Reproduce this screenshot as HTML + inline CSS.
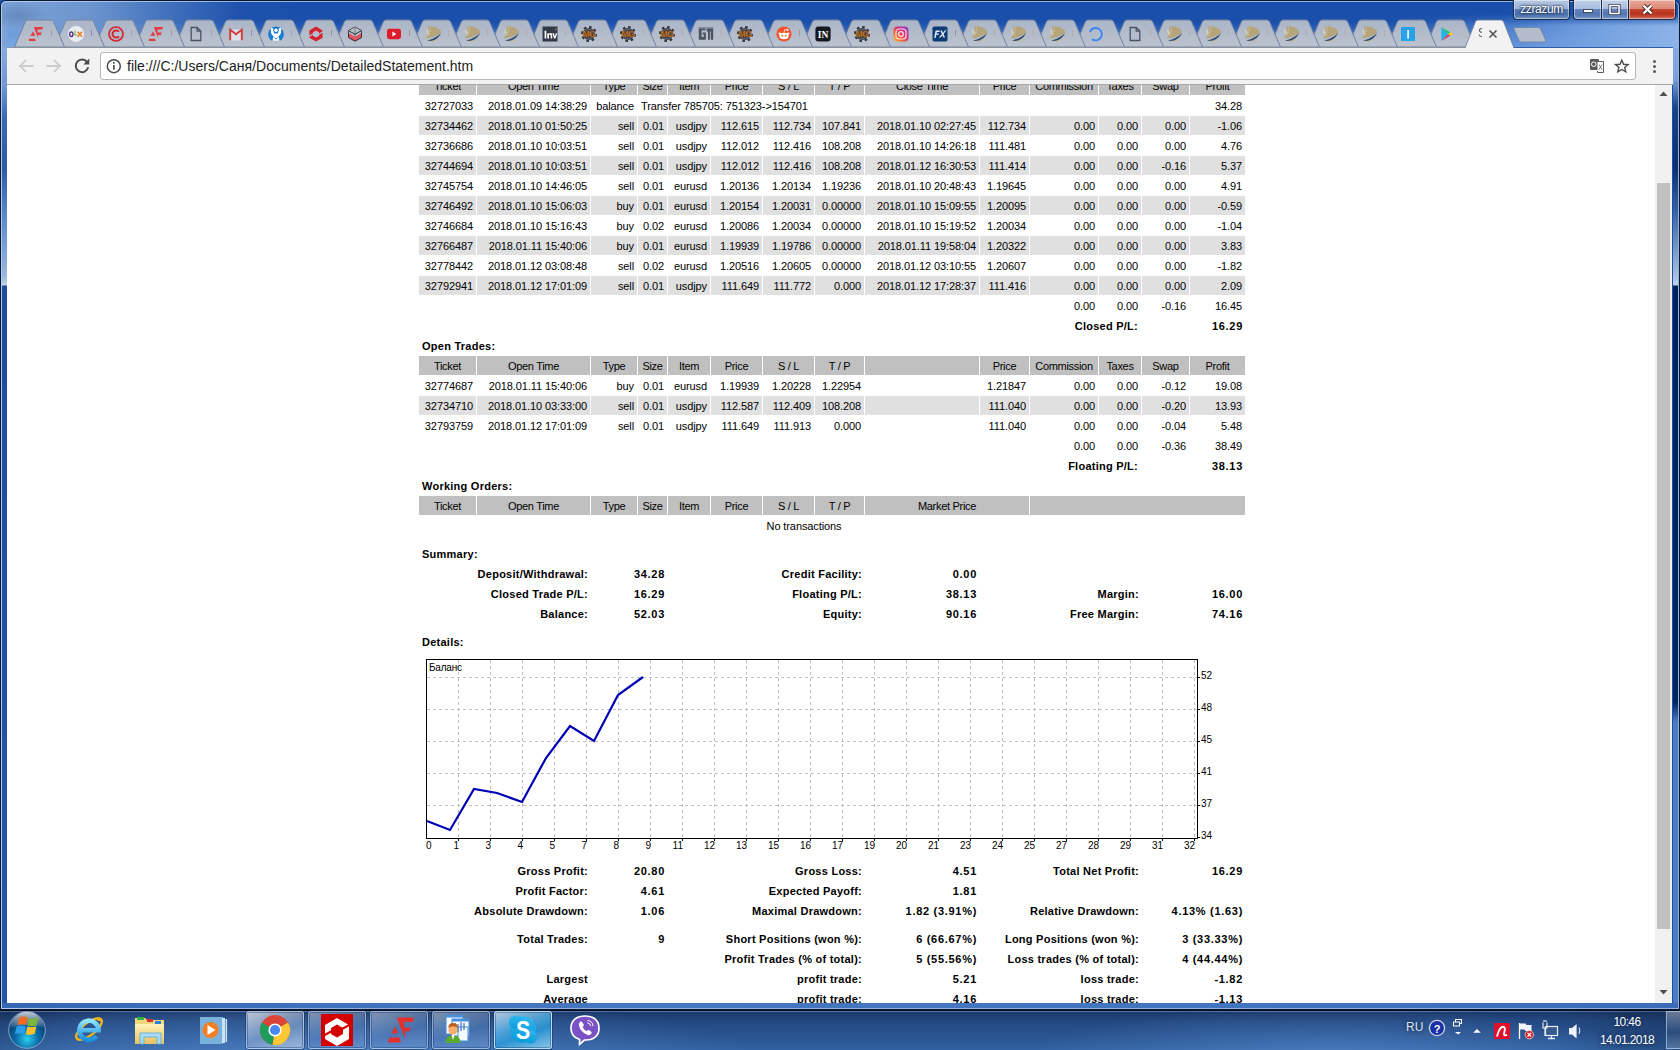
<!DOCTYPE html><html><head><meta charset="utf-8"><style>
#frame{position:absolute;left:0;top:0;width:1680px;height:1010px;
 background:
  radial-gradient(ellipse 30px 14px at 16px 14px,rgba(60,90,140,.35),rgba(60,90,140,0)),
  linear-gradient(90deg,rgba(125,165,215,1) 0,rgba(112,152,208,.95) 90px,rgba(80,125,195,.7) 170px,rgba(40,90,175,.25) 240px,rgba(26,79,171,0) 300px),
  #1a4fab;border:1px solid #0b1630;border-radius:6px 6px 0 0}
#rglow{position:absolute;left:1400px;top:14px;width:278px;height:34px;background:linear-gradient(90deg,rgba(110,155,220,0) 0,rgba(100,148,218,.55) 100px,rgba(118,162,225,.9) 180px,rgba(140,180,232,1) 278px);-webkit-mask-image:linear-gradient(180deg,transparent 0,#000 12px);mask-image:linear-gradient(180deg,transparent 0,#000 12px)}
#frame:before{content:"";position:absolute;left:0;top:0;right:0;bottom:0;border:1px solid rgba(200,220,245,.7);border-radius:5px 5px 0 0}
#lf{position:absolute;left:2px;top:47px;width:5px;height:957px;background:linear-gradient(180deg,#86aadc 0,#6f98d2 40px,#3a6ab4 70px,#2a5aa6 120px,#5a8ac8 170px,#9ab8e0 230px,#c4d4ec 238px,#1c4c9c 239px,#1f52a5 600px,#2456a8 957px)}
#rf{position:absolute;left:1673px;top:47px;width:5px;height:957px;background:linear-gradient(180deg,#86aadc 0,#7aa0d8 32px,#1a4488 60px,#0c2e6c 120px,#3a64a4 166px,#a8c0e0 230px,#c0d4ec 238px,#00205a 239px,#00245e 655px,#4a7cc4 675px,#4a7cc4 957px)}
#bf{position:absolute;left:2px;top:1003px;width:1676px;height:5px;background:linear-gradient(90deg,#3468b4,#4577c0 30%,#4275bf 70%,#3a6cb8)}
#stripglow{position:absolute;left:7px;top:22px;width:1666px;height:25px;background:linear-gradient(180deg,rgba(90,140,220,0) 0,rgba(100,150,225,.45) 13px,rgba(120,170,235,.7) 25px)}
#toolbar{position:absolute;left:7px;top:48px;width:1666px;height:37px;background:#f2f2f2;border-bottom:1px solid #a8a8a8}
#omni{position:absolute;left:100px;top:52px;width:1536px;height:28px;background:#fff;border:1px solid #b8b8b8;border-radius:3px}
#url{position:absolute;left:127px;top:57px;font-size:14px;line-height:18px;color:#222;white-space:nowrap;letter-spacing:0}
#sb{position:absolute;left:1655px;top:85px;width:17px;height:918px;background:#f1f1f1}
#thumb{position:absolute;left:1657px;top:183px;width:13px;height:746px;background:#c1c1c1}

.wb{position:absolute;top:0;height:20px;border:1px solid #1b2a48;border-top:none;box-shadow:inset 0 0 0 1px rgba(255,255,255,.45)}
#uname{left:1513px;width:57px;border-radius:0 0 4px 4px;background:linear-gradient(180deg,#b7c8e2 0,#9db4d8 45%,#5a7cb4 50%,#4a6faa 75%,#6f90c4 100%)}
#uname span{position:absolute;left:0;right:0;top:3px;text-align:center;font-size:12px;line-height:13px;color:#fff;letter-spacing:-.4px;text-shadow:0 0 3px #0d2040,0 0 2px #0d2040}
#wmin{left:1573px;width:28px;border-radius:0 0 0 4px;border-right:none;background:linear-gradient(180deg,#bfd0e8 0,#a9bedf 45%,#6383bb 50%,#5276b2 75%,#7796c8 100%)}
#wmax{left:1601px;width:27px;border-right:none;background:linear-gradient(180deg,#bfd0e8 0,#a9bedf 45%,#6383bb 50%,#5276b2 75%,#7796c8 100%)}
#wclose{left:1628px;width:48px;border-radius:0 0 4px 0;background:linear-gradient(180deg,#e9a898 0,#de8a78 45%,#c2432c 50%,#b83320 75%,#d0705a 100%)}

#taskbar{position:absolute;left:0;top:1010px;width:1680px;height:40px;overflow:hidden;
 background:linear-gradient(180deg,#050a14 0,#050a14 1px,#5a7cb4 1px,#4a6ca4 2px,#1d3868 2px,#22477f 10px,#2a5593 28px,#3061a2 40px)}
#tbglow{position:absolute;left:0;top:1011px;width:1680px;height:39px;
 background:radial-gradient(ellipse 420px 60px at 330px 45px,rgba(110,160,225,.45),rgba(110,160,225,0)),
 radial-gradient(ellipse 300px 50px at 1330px 45px,rgba(110,160,225,.4),rgba(110,160,225,0)),
 linear-gradient(90deg,rgba(0,0,0,.12) 0,rgba(0,0,0,0) 80px,rgba(0,0,0,0) 1560px,rgba(0,0,0,.15) 1660px)}
.tb{position:absolute;top:1011px;width:58px;height:38px;border:1px solid rgba(180,205,240,.6);border-radius:3px;
 background:linear-gradient(165deg,rgba(255,255,255,.42) 0,rgba(200,225,255,.22) 40%,rgba(140,180,240,.2) 55%,rgba(150,190,245,.32) 100%);
 box-shadow:inset 0 0 0 1px rgba(20,40,80,.35),0 0 0 1px rgba(10,25,50,.35)}
.tb.act{background:linear-gradient(160deg,rgba(255,255,255,.7) 0,rgba(235,242,252,.45) 35%,rgba(200,220,245,.35) 55%,rgba(220,235,250,.55) 100%)}
.tb.sky{background:linear-gradient(160deg,rgba(230,245,255,.75) 0,rgba(90,190,240,.7) 40%,rgba(40,160,225,.75) 60%,rgba(150,215,245,.85) 100%);border-color:rgba(200,235,255,.8)}
.tray{position:absolute;color:#fff;font-size:12px;line-height:14px;white-space:nowrap;letter-spacing:-.6px;text-shadow:0 0 5px rgba(0,10,40,.8)}
#showdesk{position:absolute;left:1666px;top:1011px;width:14px;height:38px;border:1px solid rgba(170,200,240,.7);border-right:none;
 background:linear-gradient(180deg,rgba(255,255,255,.35),rgba(255,255,255,.1) 45%,rgba(255,255,255,.04) 55%,rgba(255,255,255,.2))}

*{margin:0;padding:0;box-sizing:border-box}
html,body{width:1680px;height:1050px;overflow:hidden;background:#1f52aa;font-family:"Liberation Sans",sans-serif}
.abs{position:absolute}
#page{position:absolute;left:7px;top:85px;width:1648px;height:918px;background:#fff;overflow:hidden}
#pc{position:absolute;left:-7px;top:-85px;width:1680px;height:1050px}
.bg{position:absolute;height:19px}
.t{position:absolute;font-size:11px;line-height:19px;height:20px;padding-top:1px;white-space:nowrap;color:#000;letter-spacing:-0.1px}
.t.r{text-align:right}
.t.c{text-align:center}
.t.b{font-weight:bold;letter-spacing:0.25px}
.t.bn{letter-spacing:0.7px}
.t.h{letter-spacing:-0.3px}
.t.sm{font-size:10px;line-height:12px;height:12px;padding-top:0;letter-spacing:0}
</style></head><body><div id="frame"></div><div id="lf"></div><div id="rf"></div><div id="bf"></div><div id="stripglow"></div><div id="rglow"></div><svg class="abs" style="left:0;top:0" width="1680" height="48" viewBox="0 0 1680 48"><defs><linearGradient id="tg" x1="0" y1="0" x2="0" y2="1"><stop offset="0" stop-color="#aab5c8"/><stop offset="1" stop-color="#bcc3cf"/></linearGradient></defs><path d="M1425.5 47 L1436.5 21.5 Q1437.8 20 1439.0 20 L1462.0 20 Q1463.2 20 1464.5 21.5 L1475.5 47 Z" fill="url(#tg)" stroke="#7484a0" stroke-width="1"/><path d="M1386.5 47 L1397.5 21.5 Q1398.8 20 1400.0 20 L1423.0 20 Q1424.2 20 1425.5 21.5 L1436.5 47 Z" fill="url(#tg)" stroke="#7484a0" stroke-width="1"/><path d="M1347.5 47 L1358.5 21.5 Q1359.8 20 1361.0 20 L1384.0 20 Q1385.2 20 1386.5 21.5 L1397.5 47 Z" fill="url(#tg)" stroke="#7484a0" stroke-width="1"/><path d="M1308.5 47 L1319.5 21.5 Q1320.8 20 1322.0 20 L1345.0 20 Q1346.2 20 1347.5 21.5 L1358.5 47 Z" fill="url(#tg)" stroke="#7484a0" stroke-width="1"/><path d="M1269.5 47 L1280.5 21.5 Q1281.8 20 1283.0 20 L1306.0 20 Q1307.2 20 1308.5 21.5 L1319.5 47 Z" fill="url(#tg)" stroke="#7484a0" stroke-width="1"/><path d="M1230.5 47 L1241.5 21.5 Q1242.8 20 1244.0 20 L1267.0 20 Q1268.2 20 1269.5 21.5 L1280.5 47 Z" fill="url(#tg)" stroke="#7484a0" stroke-width="1"/><path d="M1191.5 47 L1202.5 21.5 Q1203.8 20 1205.0 20 L1228.0 20 Q1229.2 20 1230.5 21.5 L1241.5 47 Z" fill="url(#tg)" stroke="#7484a0" stroke-width="1"/><path d="M1152.5 47 L1163.5 21.5 Q1164.8 20 1166.0 20 L1189.0 20 Q1190.2 20 1191.5 21.5 L1202.5 47 Z" fill="url(#tg)" stroke="#7484a0" stroke-width="1"/><path d="M1113.5 47 L1124.5 21.5 Q1125.8 20 1127.0 20 L1150.0 20 Q1151.2 20 1152.5 21.5 L1163.5 47 Z" fill="url(#tg)" stroke="#7484a0" stroke-width="1"/><path d="M1074.5 47 L1085.5 21.5 Q1086.8 20 1088.0 20 L1111.0 20 Q1112.2 20 1113.5 21.5 L1124.5 47 Z" fill="url(#tg)" stroke="#7484a0" stroke-width="1"/><path d="M1035.5 47 L1046.5 21.5 Q1047.8 20 1049.0 20 L1072.0 20 Q1073.2 20 1074.5 21.5 L1085.5 47 Z" fill="url(#tg)" stroke="#7484a0" stroke-width="1"/><path d="M996.5 47 L1007.5 21.5 Q1008.8 20 1010.0 20 L1033.0 20 Q1034.2 20 1035.5 21.5 L1046.5 47 Z" fill="url(#tg)" stroke="#7484a0" stroke-width="1"/><path d="M957.5 47 L968.5 21.5 Q969.8 20 971.0 20 L994.0 20 Q995.2 20 996.5 21.5 L1007.5 47 Z" fill="url(#tg)" stroke="#7484a0" stroke-width="1"/><path d="M918.5 47 L929.5 21.5 Q930.8 20 932.0 20 L955.0 20 Q956.2 20 957.5 21.5 L968.5 47 Z" fill="url(#tg)" stroke="#7484a0" stroke-width="1"/><path d="M879.5 47 L890.5 21.5 Q891.8 20 893.0 20 L916.0 20 Q917.2 20 918.5 21.5 L929.5 47 Z" fill="url(#tg)" stroke="#7484a0" stroke-width="1"/><path d="M840.5 47 L851.5 21.5 Q852.8 20 854.0 20 L877.0 20 Q878.2 20 879.5 21.5 L890.5 47 Z" fill="url(#tg)" stroke="#7484a0" stroke-width="1"/><path d="M801.5 47 L812.5 21.5 Q813.8 20 815.0 20 L838.0 20 Q839.2 20 840.5 21.5 L851.5 47 Z" fill="url(#tg)" stroke="#7484a0" stroke-width="1"/><path d="M762.5 47 L773.5 21.5 Q774.8 20 776.0 20 L799.0 20 Q800.2 20 801.5 21.5 L812.5 47 Z" fill="url(#tg)" stroke="#7484a0" stroke-width="1"/><path d="M723.5 47 L734.5 21.5 Q735.8 20 737.0 20 L760.0 20 Q761.2 20 762.5 21.5 L773.5 47 Z" fill="url(#tg)" stroke="#7484a0" stroke-width="1"/><path d="M684.5 47 L695.5 21.5 Q696.8 20 698.0 20 L721.0 20 Q722.2 20 723.5 21.5 L734.5 47 Z" fill="url(#tg)" stroke="#7484a0" stroke-width="1"/><path d="M645.5 47 L656.5 21.5 Q657.8 20 659.0 20 L682.0 20 Q683.2 20 684.5 21.5 L695.5 47 Z" fill="url(#tg)" stroke="#7484a0" stroke-width="1"/><path d="M606.5 47 L617.5 21.5 Q618.8 20 620.0 20 L643.0 20 Q644.2 20 645.5 21.5 L656.5 47 Z" fill="url(#tg)" stroke="#7484a0" stroke-width="1"/><path d="M567.5 47 L578.5 21.5 Q579.8 20 581.0 20 L604.0 20 Q605.2 20 606.5 21.5 L617.5 47 Z" fill="url(#tg)" stroke="#7484a0" stroke-width="1"/><path d="M528.5 47 L539.5 21.5 Q540.8 20 542.0 20 L565.0 20 Q566.2 20 567.5 21.5 L578.5 47 Z" fill="url(#tg)" stroke="#7484a0" stroke-width="1"/><path d="M489.5 47 L500.5 21.5 Q501.8 20 503.0 20 L526.0 20 Q527.2 20 528.5 21.5 L539.5 47 Z" fill="url(#tg)" stroke="#7484a0" stroke-width="1"/><path d="M450.5 47 L461.5 21.5 Q462.8 20 464.0 20 L487.0 20 Q488.2 20 489.5 21.5 L500.5 47 Z" fill="url(#tg)" stroke="#7484a0" stroke-width="1"/><path d="M411.5 47 L422.5 21.5 Q423.8 20 425.0 20 L448.0 20 Q449.2 20 450.5 21.5 L461.5 47 Z" fill="url(#tg)" stroke="#7484a0" stroke-width="1"/><path d="M372.5 47 L383.5 21.5 Q384.8 20 386.0 20 L409.0 20 Q410.2 20 411.5 21.5 L422.5 47 Z" fill="url(#tg)" stroke="#7484a0" stroke-width="1"/><path d="M333.5 47 L344.5 21.5 Q345.8 20 347.0 20 L370.0 20 Q371.2 20 372.5 21.5 L383.5 47 Z" fill="url(#tg)" stroke="#7484a0" stroke-width="1"/><path d="M294.5 47 L305.5 21.5 Q306.8 20 308.0 20 L331.0 20 Q332.2 20 333.5 21.5 L344.5 47 Z" fill="url(#tg)" stroke="#7484a0" stroke-width="1"/><path d="M254.5 47 L265.5 21.5 Q266.8 20 268.0 20 L291.0 20 Q292.2 20 293.5 21.5 L304.5 47 Z" fill="url(#tg)" stroke="#7484a0" stroke-width="1"/><path d="M214.5 47 L225.5 21.5 Q226.8 20 228.0 20 L251.0 20 Q252.2 20 253.5 21.5 L264.5 47 Z" fill="url(#tg)" stroke="#7484a0" stroke-width="1"/><path d="M174.5 47 L185.5 21.5 Q186.8 20 188.0 20 L211.0 20 Q212.2 20 213.5 21.5 L224.5 47 Z" fill="url(#tg)" stroke="#7484a0" stroke-width="1"/><path d="M134.5 47 L145.5 21.5 Q146.8 20 148.0 20 L171.0 20 Q172.2 20 173.5 21.5 L184.5 47 Z" fill="url(#tg)" stroke="#7484a0" stroke-width="1"/><path d="M94.5 47 L105.5 21.5 Q106.8 20 108.0 20 L131.0 20 Q132.2 20 133.5 21.5 L144.5 47 Z" fill="url(#tg)" stroke="#7484a0" stroke-width="1"/><path d="M54.5 47 L65.5 21.5 Q66.8 20 68.0 20 L91.0 20 Q92.2 20 93.5 21.5 L104.5 47 Z" fill="url(#tg)" stroke="#7484a0" stroke-width="1"/><path d="M14.5 47 L25.5 21.5 Q26.8 20 28.0 20 L51.0 20 Q52.2 20 53.5 21.5 L64.5 47 Z" fill="url(#tg)" stroke="#7484a0" stroke-width="1"/><path d="M7 47.5H1466" stroke="#8a929e" stroke-width="1"/><path d="M1514 47.5H1673" stroke="#2f5ea8" stroke-width="1"/><path d="M1465.0 48 L1475.5 21.5 Q1476.8 20 1478.0 20 L1501.0 20 Q1502.2 20 1503.5 21.5 L1514.0 48 Z" fill="#f2f2f2"/><path d="M1465.0 48 L1475.5 21.5 Q1476.8 20 1478.0 20 L1501.0 20 Q1502.2 20 1503.5 21.5 L1514.0 48" fill="none" stroke="#6a7a98" stroke-width="0.8"/><path d="M1515 27.5 L1538.5 27.5 Q1540 27.5 1540.6 29 L1546 41 Q1546.3 42 1545 42 L1521 42 Q1519.8 42 1519.3 41 L1514 29 Q1513.6 27.5 1515 27.5Z" fill="#b4bccb" stroke="#6f82a8" stroke-width="0.8"/><path d="M1489.5 30.5 L1496.5 37.5 M1496.5 30.5 L1489.5 37.5" stroke="#555" stroke-width="1.6"/></svg><svg class="abs" style="left:0;top:0" width="1680" height="48"><g transform="translate(28 26)"><path d="M5.9 1H15L14.2 3.5H9.6V6.4H13.6L12.8 8.9H9.8L10.6 13.6Z" fill="#e4393e"/><path d="M5.4 5.3 7.3 9.7H2.2z" fill="#e4393e"/><path d="M1 12.8H7.1L7.7 14.9H.9z" fill="#e4393e"/></g><rect x="51" y="30" width="1" height="6" fill="#b07050" opacity=".45"/><g transform="translate(68 26)"><circle cx="8" cy="7.9" r="8" fill="#e9ecf3"/><ellipse cx="3.3" cy="8.2" rx="1.6" ry="2.3" fill="none" stroke="#5a2c91" stroke-width="1.4"/><path d="M6.9 4.6v4.3h2.2" fill="none" stroke="#7cc242" stroke-width="1.2"/><path d="M9.6 5.8l4.4 5M14 5.8l-4.4 5" stroke="#f07a22" stroke-width="1.6"/></g><rect x="91" y="30" width="1" height="6" fill="#6040a0" opacity=".45"/><g transform="translate(108 26)"><circle cx="8" cy="8" r="7" fill="none" stroke="#d7242e" stroke-width="1.7"/><path d="M10.9 5.7A3.6 3.6 0 1 0 10.9 10.3" fill="none" stroke="#d7242e" stroke-width="2"/></g><rect x="131" y="30" width="1" height="6" fill="#b07080" opacity=".45"/><g transform="translate(148 26)"><path d="M5.9 1H15L14.2 3.5H9.6V6.4H13.6L12.8 8.9H9.8L10.6 13.6Z" fill="#e4393e"/><path d="M5.4 5.3 7.3 9.7H2.2z" fill="#e4393e"/><path d="M1 12.8H7.1L7.7 14.9H.9z" fill="#e4393e"/></g><rect x="171" y="30" width="1" height="6" fill="#b07050" opacity=".45"/><g transform="translate(188 26)"><path d="M3.2 1.5h6l3.6 3.6v9.4H3.2z M9.2 1.5v3.6h3.6" fill="none" stroke="#4b5463" stroke-width="1.3"/></g><rect x="211" y="30" width="1" height="6" fill="#b08050" opacity=".45"/><g transform="translate(228 26)"><path d="M2 3.5h12v11H2z" fill="#dde2ea"/><path d="M2.2 14.2V3.6l5.8 4.6 5.8-4.6v10.6" fill="none" stroke="#d3393a" stroke-width="1.9"/></g><rect x="251" y="30" width="1" height="6" fill="#7050b0" opacity=".45"/><g transform="translate(268 26)"><circle cx="8" cy="8.3" r="7.9" fill="#1b7fd1"/><path d="M3.6 4.2c1-.4 1.8.3 2 1.4l.4 1.6c.6.3 3.4.3 4 0l.4-1.6c.2-1.1 1-1.8 2-1.4.9.5.9 2 .2 3.6-.5 1.2-1.4 2-2.2 2.3l1.2 4.6c-1.4.6-5.8.6-7.2 0l1.2-4.6C4.8 9.8 3.9 9 3.4 7.8c-.7-1.6-.7-3.1.2-3.6z" fill="#fff"/><circle cx="8" cy="4.2" r="1.7" fill="#fff"/><circle cx="4" cy="3.4" r="1.3" fill="#fff"/><circle cx="12" cy="3.4" r="1.3" fill="#fff"/><path d="M6.5 11.6l1.5 1.4 1.5-1.4" fill="none" stroke="#1b7fd1" stroke-width=".9"/><path d="M0 14.6h16v1.4H0z" fill="#b7bfcc"/></g><rect x="291" y="30" width="1" height="6" fill="#9080c0" opacity=".45"/><g transform="translate(308 26)"><path d="M8 .6l6.6 3.8v7.4L8 15.6 1.4 11.8V4.4z M8 4.6 5 6.3v3.6L8 11.6l3-1.7V6.3z" fill="#d3232f" fill-rule="evenodd"/><path d="M.5 10.6 5.6 7.7M15.5 5.6l-5.1 2.9" stroke="#b3bcc9" stroke-width="1.3"/></g><rect x="331" y="30" width="1" height="6" fill="#a06030" opacity=".45"/><g transform="translate(347 26)"><path d="M8 1l6.5 3.6v7L8 15.2 1.5 11.6v-7z" fill="#e0535b" stroke="#2a2f38" stroke-width="1"/><path d="M1.8 4.8 8 1.3l6.2 3.5v2.4L8 10.6 1.8 7.2z" fill="#b8c0cc"/><path d="M8 2v8.5" stroke="#8a93a2" stroke-width="1.6"/><path d="M1.8 4.8 8 8.3l6.2-3.5" fill="none" stroke="#2a2f38" stroke-width="1"/></g><rect x="370" y="30" width="1" height="6" fill="#c0c080" opacity=".45"/><g transform="translate(386 26)"><rect x="1" y="2.8" width="14" height="10.4" rx="2.4" fill="#e21b2b"/><path d="M6.4 5.6v4.8l4-2.4z" fill="#fff"/></g><rect x="409" y="30" width="1" height="6" fill="#a06030" opacity=".45"/><g transform="translate(425 26)"><path d="M3.4.4C8 0 14 1.5 15.8 5.2V7C12 10 6 12 1 12.6 3 9 4.2 4.5 3.4.4z" fill="#b6a57b"/><path d="M1 3C2.4 3.9 3.2 5.2 3.7 7L2.7 9.2C2 7.2 1.5 5.2 1 3z" fill="#ddd6b2"/><path d="M5.6 1.2C5.4 4 4.8 7 3.6 10" fill="none" stroke="#d4ccaa" stroke-width=".6"/><path d="M2 14.4C7 13.4 12.6 11 15.8 7 14.6 10.8 11 14 6.4 14.8 4.8 15 3.2 14.8 2 14.4z" fill="#2f4a6c"/><path d="M4 15.6C7.5 16 11.5 14.6 13.6 11.8 12.8 14.2 10.6 15.8 7.8 16 6.4 16 5 15.9 4 15.6z" fill="#c6b68a"/></g><rect x="448" y="30" width="1" height="6" fill="#d09060" opacity=".45"/><g transform="translate(464 26)"><path d="M3.4.4C8 0 14 1.5 15.8 5.2V7C12 10 6 12 1 12.6 3 9 4.2 4.5 3.4.4z" fill="#b6a57b"/><path d="M1 3C2.4 3.9 3.2 5.2 3.7 7L2.7 9.2C2 7.2 1.5 5.2 1 3z" fill="#ddd6b2"/><path d="M5.6 1.2C5.4 4 4.8 7 3.6 10" fill="none" stroke="#d4ccaa" stroke-width=".6"/><path d="M2 14.4C7 13.4 12.6 11 15.8 7 14.6 10.8 11 14 6.4 14.8 4.8 15 3.2 14.8 2 14.4z" fill="#2f4a6c"/><path d="M4 15.6C7.5 16 11.5 14.6 13.6 11.8 12.8 14.2 10.6 15.8 7.8 16 6.4 16 5 15.9 4 15.6z" fill="#c6b68a"/></g><rect x="487" y="30" width="1" height="6" fill="#d09060" opacity=".45"/><g transform="translate(503 26)"><path d="M3.4.4C8 0 14 1.5 15.8 5.2V7C12 10 6 12 1 12.6 3 9 4.2 4.5 3.4.4z" fill="#b6a57b"/><path d="M1 3C2.4 3.9 3.2 5.2 3.7 7L2.7 9.2C2 7.2 1.5 5.2 1 3z" fill="#ddd6b2"/><path d="M5.6 1.2C5.4 4 4.8 7 3.6 10" fill="none" stroke="#d4ccaa" stroke-width=".6"/><path d="M2 14.4C7 13.4 12.6 11 15.8 7 14.6 10.8 11 14 6.4 14.8 4.8 15 3.2 14.8 2 14.4z" fill="#2f4a6c"/><path d="M4 15.6C7.5 16 11.5 14.6 13.6 11.8 12.8 14.2 10.6 15.8 7.8 16 6.4 16 5 15.9 4 15.6z" fill="#c6b68a"/></g><rect x="526" y="30" width="1" height="6" fill="#c09060" opacity=".45"/><g transform="translate(542 26)"><rect x=".5" y=".5" width="15" height="15" fill="#333947"/><path d="M2.6 4.8h1.7v7.6H2.6zM5.3 7.2h1.6v.8c.4-.6 1-.9 1.7-.9 1.2 0 1.6.8 1.6 2v3.3H8.6V9.4c0-.7-.2-1-.7-1s-.9.4-.9 1.1v2.9H5.3zM10.3 7.2h1.6l.9 3.3.9-3.3h1.5l-1.7 5.2h-1.5z" fill="#fff"/><path d="M12.6 3.4l2-.9-.6 1.8z" fill="#f0a830"/></g><rect x="565" y="30" width="1" height="6" fill="#d09060" opacity=".45"/><g transform="translate(581 26)"><circle cx="8" cy="8" r="6.9" fill="none" stroke="#30353c" stroke-width="2.2" stroke-dasharray="2.6 2.8"/><circle cx="8" cy="8" r="6" fill="#3b4049"/><circle cx="8" cy="8" r="4.6" fill="none" stroke="#6a7080" stroke-width=".8"/><text x="8" y="11.3" font-family="Liberation Sans" font-weight="bold" font-size="8.6" fill="#f0922e" stroke="#6a3a10" stroke-width=".35" text-anchor="middle" letter-spacing="-.5">MG</text></g><rect x="604" y="30" width="1" height="6" fill="#c0c0a0" opacity=".45"/><g transform="translate(620 26)"><circle cx="8" cy="8" r="6.9" fill="none" stroke="#30353c" stroke-width="2.2" stroke-dasharray="2.6 2.8"/><circle cx="8" cy="8" r="6" fill="#3b4049"/><circle cx="8" cy="8" r="4.6" fill="none" stroke="#6a7080" stroke-width=".8"/><text x="8" y="11.3" font-family="Liberation Sans" font-weight="bold" font-size="8.6" fill="#f0922e" stroke="#6a3a10" stroke-width=".35" text-anchor="middle" letter-spacing="-.5">MG</text></g><rect x="643" y="30" width="1" height="6" fill="#d0a060" opacity=".45"/><g transform="translate(659 26)"><circle cx="8" cy="8" r="6.9" fill="none" stroke="#30353c" stroke-width="2.2" stroke-dasharray="2.6 2.8"/><circle cx="8" cy="8" r="6" fill="#3b4049"/><circle cx="8" cy="8" r="4.6" fill="none" stroke="#6a7080" stroke-width=".8"/><text x="8" y="11.3" font-family="Liberation Sans" font-weight="bold" font-size="8.6" fill="#f0922e" stroke="#6a3a10" stroke-width=".35" text-anchor="middle" letter-spacing="-.5">MG</text></g><rect x="682" y="30" width="1" height="6" fill="#d09060" opacity=".45"/><g transform="translate(698 26)"><path d="M.8 1.2h7v3H3.6v6.8h2.2V8.4H4.6V6.6h3.2v7.2H.8zM8.8 1.2h6.4v12.6h-2.4V5.4h-.9v8.4H10V5.4h-1.2z" fill="#4b5260"/><path d="M.8 1.2h14.4v1.5H.8z" fill="#8a93a0"/></g><rect x="721" y="30" width="1" height="6" fill="#d09060" opacity=".45"/><g transform="translate(737 26)"><circle cx="8" cy="8" r="6.9" fill="none" stroke="#30353c" stroke-width="2.2" stroke-dasharray="2.6 2.8"/><circle cx="8" cy="8" r="6" fill="#3b4049"/><circle cx="8" cy="8" r="4.6" fill="none" stroke="#6a7080" stroke-width=".8"/><text x="8" y="11.3" font-family="Liberation Sans" font-weight="bold" font-size="8.6" fill="#f0922e" stroke="#6a3a10" stroke-width=".35" text-anchor="middle" letter-spacing="-.5">MG</text></g><rect x="760" y="30" width="1" height="6" fill="#c0c0a0" opacity=".45"/><g transform="translate(776 26)"><circle cx="8" cy="8" r="7.6" fill="#f0522a"/><ellipse cx="8" cy="10" rx="4.6" ry="3.2" fill="#fff"/><circle cx="3.8" cy="7.6" r="1.2" fill="#fff"/><circle cx="12.2" cy="7.6" r="1.2" fill="#fff"/><circle cx="6.3" cy="9.6" r=".9" fill="#f0522a"/><circle cx="9.7" cy="9.6" r=".9" fill="#f0522a"/><path d="M8 6.8l.8-3.4 2.4.6" fill="none" stroke="#fff" stroke-width=".7"/><circle cx="11.6" cy="4" r=".9" fill="#fff"/></g><rect x="799" y="30" width="1" height="6" fill="#a06030" opacity=".45"/><g transform="translate(815 26)"><rect x=".4" y=".4" width="15.2" height="15.2" rx="3" fill="#151a22"/><text x="8" y="11.6" font-family="Liberation Serif" font-weight="bold" font-size="9.5" fill="#fff" text-anchor="middle">IN</text></g><rect x="838" y="30" width="1" height="6" fill="#c0c0a0" opacity=".45"/><g transform="translate(854 26)"><circle cx="8" cy="8" r="6.9" fill="none" stroke="#30353c" stroke-width="2.2" stroke-dasharray="2.6 2.8"/><circle cx="8" cy="8" r="6" fill="#3b4049"/><circle cx="8" cy="8" r="4.6" fill="none" stroke="#6a7080" stroke-width=".8"/><text x="8" y="11.3" font-family="Liberation Sans" font-weight="bold" font-size="8.6" fill="#f0922e" stroke="#6a3a10" stroke-width=".35" text-anchor="middle" letter-spacing="-.5">MG</text></g><rect x="877" y="30" width="1" height="6" fill="#c0c0a0" opacity=".45"/><g transform="translate(893 26)"><defs><linearGradient id="ig" x1="0" y1="1" x2="1" y2="0"><stop offset="0" stop-color="#fdc34a"/><stop offset=".3" stop-color="#f5682d"/><stop offset=".6" stop-color="#d8307a"/><stop offset="1" stop-color="#7b3fd0"/></linearGradient></defs><rect x=".5" y=".5" width="15" height="15" rx="4" fill="url(#ig)"/><rect x="3" y="3" width="10" height="10" rx="3" fill="none" stroke="#fff" stroke-width="1.2" opacity=".85"/><circle cx="8" cy="8" r="2.4" fill="none" stroke="#fff" stroke-width="1.2" opacity=".85"/></g><rect x="916" y="30" width="1" height="6" fill="#c0c0a0" opacity=".45"/><g transform="translate(932 26)"><rect x=".5" y=".5" width="15" height="15" rx="1.8" fill="#0f3b75"/><path d="M3.6 4.6h4.2l-.3 1.3H4.9l-.3 1.5h2.4l-.3 1.3H4.3l-.7 3.3H2.2zM8.3 4.6h1.6l1 2.3 1.8-2.3h1.6l-2.8 3.5 1.6 3.4h-1.6l-1-2.3-1.9 2.3H7l2.9-3.5z" fill="#e8eef8"/><path d="M12.8 3.8l1.6-1-.9 1.6z" fill="#3ab0e0"/></g><rect x="955" y="30" width="1" height="6" fill="#a06030" opacity=".45"/><g transform="translate(971 26)"><path d="M3.4.4C8 0 14 1.5 15.8 5.2V7C12 10 6 12 1 12.6 3 9 4.2 4.5 3.4.4z" fill="#b6a57b"/><path d="M1 3C2.4 3.9 3.2 5.2 3.7 7L2.7 9.2C2 7.2 1.5 5.2 1 3z" fill="#ddd6b2"/><path d="M5.6 1.2C5.4 4 4.8 7 3.6 10" fill="none" stroke="#d4ccaa" stroke-width=".6"/><path d="M2 14.4C7 13.4 12.6 11 15.8 7 14.6 10.8 11 14 6.4 14.8 4.8 15 3.2 14.8 2 14.4z" fill="#2f4a6c"/><path d="M4 15.6C7.5 16 11.5 14.6 13.6 11.8 12.8 14.2 10.6 15.8 7.8 16 6.4 16 5 15.9 4 15.6z" fill="#c6b68a"/></g><rect x="994" y="30" width="1" height="6" fill="#d09060" opacity=".45"/><g transform="translate(1010 26)"><path d="M3.4.4C8 0 14 1.5 15.8 5.2V7C12 10 6 12 1 12.6 3 9 4.2 4.5 3.4.4z" fill="#b6a57b"/><path d="M1 3C2.4 3.9 3.2 5.2 3.7 7L2.7 9.2C2 7.2 1.5 5.2 1 3z" fill="#ddd6b2"/><path d="M5.6 1.2C5.4 4 4.8 7 3.6 10" fill="none" stroke="#d4ccaa" stroke-width=".6"/><path d="M2 14.4C7 13.4 12.6 11 15.8 7 14.6 10.8 11 14 6.4 14.8 4.8 15 3.2 14.8 2 14.4z" fill="#2f4a6c"/><path d="M4 15.6C7.5 16 11.5 14.6 13.6 11.8 12.8 14.2 10.6 15.8 7.8 16 6.4 16 5 15.9 4 15.6z" fill="#c6b68a"/></g><rect x="1033" y="30" width="1" height="6" fill="#d09060" opacity=".45"/><g transform="translate(1049 26)"><path d="M3.4.4C8 0 14 1.5 15.8 5.2V7C12 10 6 12 1 12.6 3 9 4.2 4.5 3.4.4z" fill="#b6a57b"/><path d="M1 3C2.4 3.9 3.2 5.2 3.7 7L2.7 9.2C2 7.2 1.5 5.2 1 3z" fill="#ddd6b2"/><path d="M5.6 1.2C5.4 4 4.8 7 3.6 10" fill="none" stroke="#d4ccaa" stroke-width=".6"/><path d="M2 14.4C7 13.4 12.6 11 15.8 7 14.6 10.8 11 14 6.4 14.8 4.8 15 3.2 14.8 2 14.4z" fill="#2f4a6c"/><path d="M4 15.6C7.5 16 11.5 14.6 13.6 11.8 12.8 14.2 10.6 15.8 7.8 16 6.4 16 5 15.9 4 15.6z" fill="#c6b68a"/></g><rect x="1072" y="30" width="1" height="6" fill="#d09060" opacity=".45"/><g transform="translate(1088 26)"><path d="M2.2 5.2A6.2 6.2 0 1 1 4.6 13.6" fill="none" stroke="#3b86f7" stroke-width="1.9" stroke-linecap="round"/></g><rect x="1111" y="30" width="1" height="6" fill="#c0c0a0" opacity=".45"/><g transform="translate(1127 26)"><path d="M3.2 1.5h6l3.6 3.6v9.4H3.2z M9.2 1.5v3.6h3.6" fill="none" stroke="#4b5463" stroke-width="1.3"/></g><rect x="1150" y="30" width="1" height="6" fill="#d09060" opacity=".45"/><g transform="translate(1166 26)"><path d="M3.4.4C8 0 14 1.5 15.8 5.2V7C12 10 6 12 1 12.6 3 9 4.2 4.5 3.4.4z" fill="#b6a57b"/><path d="M1 3C2.4 3.9 3.2 5.2 3.7 7L2.7 9.2C2 7.2 1.5 5.2 1 3z" fill="#ddd6b2"/><path d="M5.6 1.2C5.4 4 4.8 7 3.6 10" fill="none" stroke="#d4ccaa" stroke-width=".6"/><path d="M2 14.4C7 13.4 12.6 11 15.8 7 14.6 10.8 11 14 6.4 14.8 4.8 15 3.2 14.8 2 14.4z" fill="#2f4a6c"/><path d="M4 15.6C7.5 16 11.5 14.6 13.6 11.8 12.8 14.2 10.6 15.8 7.8 16 6.4 16 5 15.9 4 15.6z" fill="#c6b68a"/></g><rect x="1189" y="30" width="1" height="6" fill="#d09060" opacity=".45"/><g transform="translate(1205 26)"><path d="M3.4.4C8 0 14 1.5 15.8 5.2V7C12 10 6 12 1 12.6 3 9 4.2 4.5 3.4.4z" fill="#b6a57b"/><path d="M1 3C2.4 3.9 3.2 5.2 3.7 7L2.7 9.2C2 7.2 1.5 5.2 1 3z" fill="#ddd6b2"/><path d="M5.6 1.2C5.4 4 4.8 7 3.6 10" fill="none" stroke="#d4ccaa" stroke-width=".6"/><path d="M2 14.4C7 13.4 12.6 11 15.8 7 14.6 10.8 11 14 6.4 14.8 4.8 15 3.2 14.8 2 14.4z" fill="#2f4a6c"/><path d="M4 15.6C7.5 16 11.5 14.6 13.6 11.8 12.8 14.2 10.6 15.8 7.8 16 6.4 16 5 15.9 4 15.6z" fill="#c6b68a"/></g><rect x="1228" y="30" width="1" height="6" fill="#d09060" opacity=".45"/><g transform="translate(1244 26)"><path d="M3.4.4C8 0 14 1.5 15.8 5.2V7C12 10 6 12 1 12.6 3 9 4.2 4.5 3.4.4z" fill="#b6a57b"/><path d="M1 3C2.4 3.9 3.2 5.2 3.7 7L2.7 9.2C2 7.2 1.5 5.2 1 3z" fill="#ddd6b2"/><path d="M5.6 1.2C5.4 4 4.8 7 3.6 10" fill="none" stroke="#d4ccaa" stroke-width=".6"/><path d="M2 14.4C7 13.4 12.6 11 15.8 7 14.6 10.8 11 14 6.4 14.8 4.8 15 3.2 14.8 2 14.4z" fill="#2f4a6c"/><path d="M4 15.6C7.5 16 11.5 14.6 13.6 11.8 12.8 14.2 10.6 15.8 7.8 16 6.4 16 5 15.9 4 15.6z" fill="#c6b68a"/></g><rect x="1267" y="30" width="1" height="6" fill="#d09060" opacity=".45"/><g transform="translate(1283 26)"><path d="M3.4.4C8 0 14 1.5 15.8 5.2V7C12 10 6 12 1 12.6 3 9 4.2 4.5 3.4.4z" fill="#b6a57b"/><path d="M1 3C2.4 3.9 3.2 5.2 3.7 7L2.7 9.2C2 7.2 1.5 5.2 1 3z" fill="#ddd6b2"/><path d="M5.6 1.2C5.4 4 4.8 7 3.6 10" fill="none" stroke="#d4ccaa" stroke-width=".6"/><path d="M2 14.4C7 13.4 12.6 11 15.8 7 14.6 10.8 11 14 6.4 14.8 4.8 15 3.2 14.8 2 14.4z" fill="#2f4a6c"/><path d="M4 15.6C7.5 16 11.5 14.6 13.6 11.8 12.8 14.2 10.6 15.8 7.8 16 6.4 16 5 15.9 4 15.6z" fill="#c6b68a"/></g><rect x="1306" y="30" width="1" height="6" fill="#d09060" opacity=".45"/><g transform="translate(1322 26)"><path d="M3.4.4C8 0 14 1.5 15.8 5.2V7C12 10 6 12 1 12.6 3 9 4.2 4.5 3.4.4z" fill="#b6a57b"/><path d="M1 3C2.4 3.9 3.2 5.2 3.7 7L2.7 9.2C2 7.2 1.5 5.2 1 3z" fill="#ddd6b2"/><path d="M5.6 1.2C5.4 4 4.8 7 3.6 10" fill="none" stroke="#d4ccaa" stroke-width=".6"/><path d="M2 14.4C7 13.4 12.6 11 15.8 7 14.6 10.8 11 14 6.4 14.8 4.8 15 3.2 14.8 2 14.4z" fill="#2f4a6c"/><path d="M4 15.6C7.5 16 11.5 14.6 13.6 11.8 12.8 14.2 10.6 15.8 7.8 16 6.4 16 5 15.9 4 15.6z" fill="#c6b68a"/></g><rect x="1345" y="30" width="1" height="6" fill="#d09060" opacity=".45"/><g transform="translate(1361 26)"><path d="M3.4.4C8 0 14 1.5 15.8 5.2V7C12 10 6 12 1 12.6 3 9 4.2 4.5 3.4.4z" fill="#b6a57b"/><path d="M1 3C2.4 3.9 3.2 5.2 3.7 7L2.7 9.2C2 7.2 1.5 5.2 1 3z" fill="#ddd6b2"/><path d="M5.6 1.2C5.4 4 4.8 7 3.6 10" fill="none" stroke="#d4ccaa" stroke-width=".6"/><path d="M2 14.4C7 13.4 12.6 11 15.8 7 14.6 10.8 11 14 6.4 14.8 4.8 15 3.2 14.8 2 14.4z" fill="#2f4a6c"/><path d="M4 15.6C7.5 16 11.5 14.6 13.6 11.8 12.8 14.2 10.6 15.8 7.8 16 6.4 16 5 15.9 4 15.6z" fill="#c6b68a"/></g><rect x="1384" y="30" width="1" height="6" fill="#d09060" opacity=".45"/><g transform="translate(1400 26)"><rect x="1" y="1" width="14" height="14" fill="#27a2e6"/><rect x="7.2" y="4" width="1.8" height="8.6" fill="#e6f2fc"/></g><rect x="1423" y="30" width="1" height="6" fill="#c0c0a0" opacity=".45"/><g transform="translate(1439 26)"><path d="M2.4 1.2 9.2 8 2.4 14.8z" fill="#1cb8ec"/><path d="M2.4 1.2 11.4 6.2 9.2 8z" fill="#21c46a"/><path d="M2.4 14.8 9.2 8l2.2 1.8z" fill="#e6385a"/><path d="M9.2 8l2.2-1.8 3 1.8-3 1.8z" fill="#f2c81e"/></g><rect x="1462" y="30" width="1" height="6" fill="#c0c0a0" opacity=".45"/></svg><div class="wb" id="uname"><span>zzrazum</span></div><div class="wb" id="wmin"></div><div class="wb" id="wmax"></div><div class="wb" id="wclose"></div><svg class="abs" style="left:1573px;top:0" width="103" height="20"><rect x="10.5" y="9.5" width="9" height="3" fill="#fff" stroke="#2a3040" stroke-width=".8"/><rect x="37" y="5.5" width="9" height="8" fill="none" stroke="#2a3040" stroke-width="3"/><rect x="37" y="5.5" width="9" height="8" fill="none" stroke="#fff" stroke-width="1.6"/><path d="M70.5 5.5 L78.5 13.5 M78.5 5.5 L70.5 13.5" stroke="#3a2020" stroke-width="4"/><path d="M70.5 5.5 L78.5 13.5 M78.5 5.5 L70.5 13.5" stroke="#fff" stroke-width="2.4"/></svg><div style="position:absolute;left:1478px;top:27px;width:3.5px;height:13px;overflow:hidden;font-size:12px;line-height:13px;color:#333;opacity:.8">S</div><div id="toolbar"></div><div id="omni"></div><div id="url">file:///C:/Users/Саня/Documents/DetailedStatement.htm</div><div id="sb"></div><div id="thumb"></div><svg class="abs" style="left:0;top:48px" width="1680" height="37" viewBox="0 48 1680 37"><path d="M33 66H20 M25.5 60.5 L20 66 L25.5 71.5" stroke="#cdcdcd" stroke-width="1.8" fill="none" stroke-linecap="square"/><path d="M47 66H60 M54.5 60.5 L60 66 L54.5 71.5" stroke="#cdcdcd" stroke-width="1.8" fill="none" stroke-linecap="square"/><path d="M87.2 62.2 A6.3 6.3 0 1 0 88.2 67.3" stroke="#4a4a4a" stroke-width="1.9" fill="none"/><path d="M89.3 58.6 V64.6 H83.3 Z" fill="#4a4a4a"/><circle cx="113.8" cy="66.2" r="6.5" stroke="#4a4a4a" stroke-width="1.5" fill="none"/><rect x="113" y="65" width="1.7" height="4.6" fill="#4a4a4a"/><rect x="113" y="61.9" width="1.7" height="1.8" fill="#4a4a4a"/><rect x="1590" y="59" width="9" height="11" rx="1" fill="#5a5a5a"/><path d="M1597.5 61.5 h6 v11 h-6 v-1.5" stroke="#5a5a5a" stroke-width="1" fill="#fff"/><circle cx="1593.8" cy="64.2" r="2.3" stroke="#fff" stroke-width="1" fill="none"/><path d="M1599 64.5 l3 5 M1602 64.5 l-3 5" stroke="#5a5a5a" stroke-width="0.8"/><path d="M1621.8 60.2 L1623.6 64.3 L1628 64.6 L1624.7 67.5 L1625.8 71.8 L1621.8 69.5 L1617.8 71.8 L1618.9 67.5 L1615.6 64.6 L1620 64.3 Z" stroke="#4a4a4a" stroke-width="1.4" fill="none" stroke-linejoin="miter"/><circle cx="1654.5" cy="61.4" r="1.5" fill="#5a5a5a"/><circle cx="1654.5" cy="66.5" r="1.5" fill="#5a5a5a"/><circle cx="1654.5" cy="71.5" r="1.5" fill="#5a5a5a"/></svg><svg class="abs" style="left:1655px;top:85px" width="17" height="918"><path d="M4.5 11 L8.5 6.5 L12.5 11Z" fill="#505050"/><path d="M4.5 905 L8.5 909.5 L12.5 905Z" fill="#505050"/></svg><div id="taskbar"></div><div id="tbglow"></div><div class="tb act" style="left:246px"></div><div class="tb" style="left:308px"></div><div class="tb" style="left:370px"></div><div class="tb" style="left:432px"></div><div class="tb sky" style="left:494px"></div><div id="showdesk"></div><svg class="abs" style="left:0;top:1010px" width="1680" height="40" viewBox="0 1010 1680 40"><defs>
<radialGradient id="orb" cx=".5" cy=".75" r=".7"><stop offset="0" stop-color="#2ad0f0"/><stop offset=".45" stop-color="#0d6aa8"/><stop offset="1" stop-color="#0b2f5a"/></radialGradient>
<linearGradient id="orbhl" x1="0" y1="0" x2="0" y2="1"><stop offset="0" stop-color="#fff" stop-opacity=".75"/><stop offset="1" stop-color="#fff" stop-opacity=".08"/></linearGradient>
<linearGradient id="ieg" x1="0" y1="0" x2="0" y2="1"><stop offset="0" stop-color="#8fe4ff"/><stop offset="1" stop-color="#1a8ee0"/></linearGradient>
<linearGradient id="fold" x1="0" y1="0" x2="0" y2="1"><stop offset="0" stop-color="#fff3b8"/><stop offset="1" stop-color="#e8c060"/></linearGradient>
<linearGradient id="sky" x1="0" y1="0" x2="0" y2="1"><stop offset="0" stop-color="#30b8f0"/><stop offset="1" stop-color="#0a9ad8"/></linearGradient>
</defs><circle cx="27" cy="1030" r="18.3" fill="url(#orb)" stroke="#9fb8d8" stroke-width="1" stroke-opacity=".8"/><path d="M9.7 1027.5 A17.4 17.4 0 0 1 44.3 1027.5 Q27 1022.5 9.7 1027.5Z" fill="url(#orbhl)"/><path d="M19 1017.5q4-2 9 0l-1.6 7.6q-4.5-1.6-9 0z" fill="#f06a20"/><path d="M29.2 1018q4.5 1.6 9-.4l-1.6 7.6q-4.5 2-9 .4z" fill="#7ab83a"/><path d="M16.6 1026.4q4.5-1.6 9 0l-1.6 7.6q-4.5-1.6-9 0z" fill="#2a9ee8"/><path d="M27.4 1026.6q4.5 1.6 9-.4l-1.6 7.6q-4.5 2-9 .4z" fill="#fbc02a"/><ellipse cx="89" cy="1029" rx="15.5" ry="6.2" transform="rotate(-38 89 1029)" fill="none" stroke="#f2b418" stroke-width="2.4"/><path d="M79.6 1030.2H98.6A9.6 9.6 0 1 0 96.4 1036.4" fill="none" stroke="url(#ieg)" stroke-width="4.6"/><path d="M97 1019.6A15.5 6.2 -38 0 1 101.8 1021.6" fill="none" stroke="#f2b418" stroke-width="2.4"/><path d="M135 1018h10l2 2h17v24h-29z" fill="#f4d77a"/><path d="M137 1017h7v3h-7z" fill="#30b040"/><path d="M147 1019h6v3h-6z" fill="#d83030"/><path d="M155 1021h6v3h-6z" fill="#2a80e0"/><path d="M135 1024h29v20h-29z" fill="url(#fold)"/><path d="M140 1033h21v11h-4v-7h-13v7h-4z" fill="#a8dcf4" stroke="#5aa8d8" stroke-width=".8"/><path d="M200 1017h23v27h-23z" fill="#7ab0dc"/><path d="M222 1018h3v25h-3zM225.5 1019h1.6v23h-1.6z" fill="#c8e2f6"/><circle cx="210.5" cy="1030" r="8" fill="#f57e22"/><path d="M207.5 1025v10l8-5z" fill="#fff"/><g transform="translate(275 1030)"><circle r="15" fill="#db4437"/><path d="M0 0 L13 -7.5 A15 15 0 0 1 -2.6 14.8Z" fill="#fcc934"/><path d="M0 0 L-2.6 14.8 A15 15 0 0 1 -13 -7.5Z" fill="#1e9e5a"/><path d="M0 -6.4 H13 M5.5 3.2 L-1.3 14.9 M-5.5 3.2 L-12.4 -8.4" stroke="none"/><circle r="6.6" fill="#fff"/><circle r="5.1" fill="#4a89f3"/></g><rect x="321" y="1014" width="32" height="32" fill="#d40000"/><path d="M337 1018l12 7v14l-12 7-12-7v-14z" fill="#fff"/><path d="M337 1024.5l6 3.5v6l-6 3.5-6-3.5v-6z" fill="#d40000"/><path d="M322 1036.5l10-5.5M352 1023.5l-10 5.5" stroke="#d40000" stroke-width="2"/><path d="M396.7 1017.6H414.2L412.8 1022H404L404.4 1027.4H410.7L409.8 1031.2H404.8L405.3 1039.7Z" fill="#e2302c"/><path d="M395.2 1026.2 397.9 1033.6H391.4Z" fill="#e2302c"/><path d="M389.2 1037.4H399.6L400.8 1042.4H388Z" fill="#e2302c"/><rect x="446" y="1015" width="17" height="19" fill="#f4f8ff" stroke="#4a90d8" stroke-width="1"/><rect x="446" y="1015" width="17" height="2.5" fill="#4a90d8"/><rect x="452" y="1019" width="17" height="17" fill="#f4f8ff" stroke="#4a90d8" stroke-width="1"/><rect x="452" y="1019" width="17" height="2.5" fill="#4a90d8"/><rect x="458" y="1027" width="10" height="14" fill="#f4f8ff" stroke="#4a90d8" stroke-width="1"/><path d="M455 1023v9M458 1024v8M461 1022v9M464 1023v7" stroke="#3a70c0" stroke-width="1.2"/><circle cx="453" cy="1030" r="4.6" fill="#f5b070"/><path d="M448.4 1028q0-5 4.8-5 4.6.2 4.6 5-2-1.8-4.6-1.8-2.6 0-4.8 1.8z" fill="#c85a18"/><path d="M445.5 1043q0-7.4 7.5-8 7.6.6 7.6 8z" fill="#5aa830"/><path d="M451.5 1035l1.5 5 1.6-5z" fill="#fff"/><circle cx="523" cy="1029.5" r="13.2" fill="url(#sky)"/><circle cx="515.6" cy="1022" r="6.6" fill="url(#sky)"/><circle cx="530.4" cy="1037" r="6.6" fill="url(#sky)"/><text x="523" y="1038.6" font-family="Liberation Sans" font-weight="bold" font-size="25" fill="#fff" text-anchor="middle" transform="translate(523 0) scale(.85 1) translate(-523 0)">S</text><path d="M585 1016c8.5 0 14 4.4 14 12.2 0 7.6-5.4 11.8-13 11.8h-1.6l-4.8 4.4v-4.9c-5-1.6-8.6-5.3-8.6-11.3 0-7.8 5.5-12.2 14-12.2z" fill="#7b51c6" stroke="#fff" stroke-width="1.7"/><path d="M580.2 1021.6c1-.6 1.8.2 2.4 1.1l1 1.5c.5.9.2 1.6-.4 2.1l-.6.5c.6 1.8 2.1 3.6 3.9 4.4l.6-.6c.5-.6 1.2-.8 2-.3l1.6 1c.9.6 1.3 1.4.7 2.3-.9 1.3-2 1.8-3.2 1.6-4.1-.9-8.5-5.4-9.2-9.6-.2-1.4.2-2.9 1.2-4z" fill="#fff"/><path d="M587.5 1020.5a6 6 0 0 1 5.5 5.5M587.2 1022.8a3.6 3.6 0 0 1 3.4 3.4" fill="none" stroke="#fff" stroke-width="1"/><circle cx="1437" cy="1028" r="7.6" fill="#1a2fa8" stroke="#c8d0e0" stroke-width="1.4"/><text x="1437" y="1032.6" font-family="Liberation Sans" font-weight="bold" font-size="11" fill="#fff" text-anchor="middle">?</text><rect x="1455.5" y="1019.5" width="6" height="4" fill="none" stroke="#fff" stroke-width="1"/><rect x="1453.5" y="1022" width="6" height="4" fill="#2a5090" stroke="#fff" stroke-width="1"/><path d="M1455 1032h6l-3 2.6z" fill="#fff"/><path d="M1473.2 1032.8h7.6l-3.8-3.8z" fill="#fff"/><rect x="1494" y="1023" width="16" height="16" fill="#e0102a"/><path d="M1497 1036.5c1.2-4.8 3-8.8 5.4-9.6 1.8-.6 2.8 1 2.4 3.2-.4 2.2-1.2 3.6-.6 4.8.4.8 1.6.6 2.6-.4" fill="none" stroke="#fff" stroke-width="1.9"/><path d="M1519.5 1023v16" stroke="#fff" stroke-width="1.3"/><path d="M1520 1023.5h5.5l1 1.5h5v6h-6l-1-1.5h-4.5z" fill="#f0f4fa"/><circle cx="1529.3" cy="1034.7" r="4.2" fill="#e02020" stroke="#fff" stroke-width=".6"/><path d="M1527.5 1032.9l3.6 3.6M1531.1 1032.9l-3.6 3.6" stroke="#fff" stroke-width="1.2"/><rect x="1545.5" y="1026.5" width="12" height="9" fill="#355a8c" stroke="#e8eef8" stroke-width="1.2"/><path d="M1548 1038.5h7" stroke="#e8eef8" stroke-width="1.5"/><path d="M1551.5 1036v2" stroke="#e8eef8" stroke-width="1.2"/><path d="M1543 1022.5v5.5h4v-5.5M1544 1022v-2M1546 1022v-2M1545 1028v8" fill="none" stroke="#f0f4fa" stroke-width="1.1"/><path d="M1569 1028h3l4.6-4v14.4l-4.6-4h-3z" fill="#f0f4fa"/><path d="M1579 1027.5q1.6 3.2 0 6.4" fill="none" stroke="#f0f4fa" stroke-width="1"/></svg><div class="tray" style="left:1598px;top:1015px;width:58px;text-align:center">10:46</div><div class="tray" style="left:1596px;top:1033px;width:62px;text-align:center">14.01.2018</div><div class="tray" style="left:1406px;top:1020px;color:#dbe4f0;letter-spacing:0">RU</div><div id="page"><div id="pc"><div class="bg" style="left:419px;top:76px;width:57px;background:#C0C0C0"></div><div class="t h c" style="left:419px;width:57px;top:76px">Ticket</div><div class="bg" style="left:477px;top:76px;width:113px;background:#C0C0C0"></div><div class="t h c" style="left:477px;width:113px;top:76px">Open Time</div><div class="bg" style="left:591px;top:76px;width:46px;background:#C0C0C0"></div><div class="t h c" style="left:591px;width:46px;top:76px">Type</div><div class="bg" style="left:638px;top:76px;width:29px;background:#C0C0C0"></div><div class="t h c" style="left:638px;width:29px;top:76px">Size</div><div class="bg" style="left:668px;top:76px;width:42px;background:#C0C0C0"></div><div class="t h c" style="left:668px;width:42px;top:76px">Item</div><div class="bg" style="left:711px;top:76px;width:51px;background:#C0C0C0"></div><div class="t h c" style="left:711px;width:51px;top:76px">Price</div><div class="bg" style="left:763px;top:76px;width:51px;background:#C0C0C0"></div><div class="t h c" style="left:763px;width:51px;top:76px">S / L</div><div class="bg" style="left:815px;top:76px;width:49px;background:#C0C0C0"></div><div class="t h c" style="left:815px;width:49px;top:76px">T / P</div><div class="bg" style="left:865px;top:76px;width:114px;background:#C0C0C0"></div><div class="t h c" style="left:865px;width:114px;top:76px">Close Time</div><div class="bg" style="left:980px;top:76px;width:49px;background:#C0C0C0"></div><div class="t h c" style="left:980px;width:49px;top:76px">Price</div><div class="bg" style="left:1030px;top:76px;width:68px;background:#C0C0C0"></div><div class="t h c" style="left:1030px;width:68px;top:76px">Commission</div><div class="bg" style="left:1099px;top:76px;width:42px;background:#C0C0C0"></div><div class="t h c" style="left:1099px;width:42px;top:76px">Taxes</div><div class="bg" style="left:1142px;top:76px;width:47px;background:#C0C0C0"></div><div class="t h c" style="left:1142px;width:47px;top:76px">Swap</div><div class="bg" style="left:1190px;top:76px;width:55px;background:#C0C0C0"></div><div class="t h c" style="left:1190px;width:55px;top:76px">Profit</div><div class="t r" style="right:1207px;top:96px">32727033</div><div class="t r" style="right:1093px;top:96px">2018.01.09 14:38:29</div><div class="t r" style="right:1046px;top:96px">balance</div><div class="t" style="left:641px;top:96px">Transfer 785705: 751323-&gt;154701</div><div class="t r" style="right:438px;top:96px">34.28</div><div class="bg" style="left:419px;top:116px;width:57px;background:#E0E0E0"></div><div class="bg" style="left:477px;top:116px;width:113px;background:#E0E0E0"></div><div class="bg" style="left:591px;top:116px;width:46px;background:#E0E0E0"></div><div class="bg" style="left:638px;top:116px;width:29px;background:#E0E0E0"></div><div class="bg" style="left:668px;top:116px;width:42px;background:#E0E0E0"></div><div class="bg" style="left:711px;top:116px;width:51px;background:#E0E0E0"></div><div class="bg" style="left:763px;top:116px;width:51px;background:#E0E0E0"></div><div class="bg" style="left:815px;top:116px;width:49px;background:#E0E0E0"></div><div class="bg" style="left:865px;top:116px;width:114px;background:#E0E0E0"></div><div class="bg" style="left:980px;top:116px;width:49px;background:#E0E0E0"></div><div class="bg" style="left:1030px;top:116px;width:68px;background:#E0E0E0"></div><div class="bg" style="left:1099px;top:116px;width:42px;background:#E0E0E0"></div><div class="bg" style="left:1142px;top:116px;width:47px;background:#E0E0E0"></div><div class="bg" style="left:1190px;top:116px;width:55px;background:#E0E0E0"></div><div class="t r" style="right:1207px;top:116px">32734462</div><div class="t r" style="right:1093px;top:116px">2018.01.10 01:50:25</div><div class="t r" style="right:1046px;top:116px">sell</div><div class="t r" style="right:1016px;top:116px">0.01</div><div class="t r" style="right:973px;top:116px">usdjpy</div><div class="t r" style="right:921px;top:116px">112.615</div><div class="t r" style="right:869px;top:116px">112.734</div><div class="t r" style="right:819px;top:116px">107.841</div><div class="t r" style="right:704px;top:116px">2018.01.10 02:27:45</div><div class="t r" style="right:654px;top:116px">112.734</div><div class="t r" style="right:585px;top:116px">0.00</div><div class="t r" style="right:542px;top:116px">0.00</div><div class="t r" style="right:494px;top:116px">0.00</div><div class="t r" style="right:438px;top:116px">-1.06</div><div class="t r" style="right:1207px;top:136px">32736686</div><div class="t r" style="right:1093px;top:136px">2018.01.10 10:03:51</div><div class="t r" style="right:1046px;top:136px">sell</div><div class="t r" style="right:1016px;top:136px">0.01</div><div class="t r" style="right:973px;top:136px">usdjpy</div><div class="t r" style="right:921px;top:136px">112.012</div><div class="t r" style="right:869px;top:136px">112.416</div><div class="t r" style="right:819px;top:136px">108.208</div><div class="t r" style="right:704px;top:136px">2018.01.10 14:26:18</div><div class="t r" style="right:654px;top:136px">111.481</div><div class="t r" style="right:585px;top:136px">0.00</div><div class="t r" style="right:542px;top:136px">0.00</div><div class="t r" style="right:494px;top:136px">0.00</div><div class="t r" style="right:438px;top:136px">4.76</div><div class="bg" style="left:419px;top:156px;width:57px;background:#E0E0E0"></div><div class="bg" style="left:477px;top:156px;width:113px;background:#E0E0E0"></div><div class="bg" style="left:591px;top:156px;width:46px;background:#E0E0E0"></div><div class="bg" style="left:638px;top:156px;width:29px;background:#E0E0E0"></div><div class="bg" style="left:668px;top:156px;width:42px;background:#E0E0E0"></div><div class="bg" style="left:711px;top:156px;width:51px;background:#E0E0E0"></div><div class="bg" style="left:763px;top:156px;width:51px;background:#E0E0E0"></div><div class="bg" style="left:815px;top:156px;width:49px;background:#E0E0E0"></div><div class="bg" style="left:865px;top:156px;width:114px;background:#E0E0E0"></div><div class="bg" style="left:980px;top:156px;width:49px;background:#E0E0E0"></div><div class="bg" style="left:1030px;top:156px;width:68px;background:#E0E0E0"></div><div class="bg" style="left:1099px;top:156px;width:42px;background:#E0E0E0"></div><div class="bg" style="left:1142px;top:156px;width:47px;background:#E0E0E0"></div><div class="bg" style="left:1190px;top:156px;width:55px;background:#E0E0E0"></div><div class="t r" style="right:1207px;top:156px">32744694</div><div class="t r" style="right:1093px;top:156px">2018.01.10 10:03:51</div><div class="t r" style="right:1046px;top:156px">sell</div><div class="t r" style="right:1016px;top:156px">0.01</div><div class="t r" style="right:973px;top:156px">usdjpy</div><div class="t r" style="right:921px;top:156px">112.012</div><div class="t r" style="right:869px;top:156px">112.416</div><div class="t r" style="right:819px;top:156px">108.208</div><div class="t r" style="right:704px;top:156px">2018.01.12 16:30:53</div><div class="t r" style="right:654px;top:156px">111.414</div><div class="t r" style="right:585px;top:156px">0.00</div><div class="t r" style="right:542px;top:156px">0.00</div><div class="t r" style="right:494px;top:156px">-0.16</div><div class="t r" style="right:438px;top:156px">5.37</div><div class="t r" style="right:1207px;top:176px">32745754</div><div class="t r" style="right:1093px;top:176px">2018.01.10 14:46:05</div><div class="t r" style="right:1046px;top:176px">sell</div><div class="t r" style="right:1016px;top:176px">0.01</div><div class="t r" style="right:973px;top:176px">eurusd</div><div class="t r" style="right:921px;top:176px">1.20136</div><div class="t r" style="right:869px;top:176px">1.20134</div><div class="t r" style="right:819px;top:176px">1.19236</div><div class="t r" style="right:704px;top:176px">2018.01.10 20:48:43</div><div class="t r" style="right:654px;top:176px">1.19645</div><div class="t r" style="right:585px;top:176px">0.00</div><div class="t r" style="right:542px;top:176px">0.00</div><div class="t r" style="right:494px;top:176px">0.00</div><div class="t r" style="right:438px;top:176px">4.91</div><div class="bg" style="left:419px;top:196px;width:57px;background:#E0E0E0"></div><div class="bg" style="left:477px;top:196px;width:113px;background:#E0E0E0"></div><div class="bg" style="left:591px;top:196px;width:46px;background:#E0E0E0"></div><div class="bg" style="left:638px;top:196px;width:29px;background:#E0E0E0"></div><div class="bg" style="left:668px;top:196px;width:42px;background:#E0E0E0"></div><div class="bg" style="left:711px;top:196px;width:51px;background:#E0E0E0"></div><div class="bg" style="left:763px;top:196px;width:51px;background:#E0E0E0"></div><div class="bg" style="left:815px;top:196px;width:49px;background:#E0E0E0"></div><div class="bg" style="left:865px;top:196px;width:114px;background:#E0E0E0"></div><div class="bg" style="left:980px;top:196px;width:49px;background:#E0E0E0"></div><div class="bg" style="left:1030px;top:196px;width:68px;background:#E0E0E0"></div><div class="bg" style="left:1099px;top:196px;width:42px;background:#E0E0E0"></div><div class="bg" style="left:1142px;top:196px;width:47px;background:#E0E0E0"></div><div class="bg" style="left:1190px;top:196px;width:55px;background:#E0E0E0"></div><div class="t r" style="right:1207px;top:196px">32746492</div><div class="t r" style="right:1093px;top:196px">2018.01.10 15:06:03</div><div class="t r" style="right:1046px;top:196px">buy</div><div class="t r" style="right:1016px;top:196px">0.01</div><div class="t r" style="right:973px;top:196px">eurusd</div><div class="t r" style="right:921px;top:196px">1.20154</div><div class="t r" style="right:869px;top:196px">1.20031</div><div class="t r" style="right:819px;top:196px">0.00000</div><div class="t r" style="right:704px;top:196px">2018.01.10 15:09:55</div><div class="t r" style="right:654px;top:196px">1.20095</div><div class="t r" style="right:585px;top:196px">0.00</div><div class="t r" style="right:542px;top:196px">0.00</div><div class="t r" style="right:494px;top:196px">0.00</div><div class="t r" style="right:438px;top:196px">-0.59</div><div class="t r" style="right:1207px;top:216px">32746684</div><div class="t r" style="right:1093px;top:216px">2018.01.10 15:16:43</div><div class="t r" style="right:1046px;top:216px">buy</div><div class="t r" style="right:1016px;top:216px">0.02</div><div class="t r" style="right:973px;top:216px">eurusd</div><div class="t r" style="right:921px;top:216px">1.20086</div><div class="t r" style="right:869px;top:216px">1.20034</div><div class="t r" style="right:819px;top:216px">0.00000</div><div class="t r" style="right:704px;top:216px">2018.01.10 15:19:52</div><div class="t r" style="right:654px;top:216px">1.20034</div><div class="t r" style="right:585px;top:216px">0.00</div><div class="t r" style="right:542px;top:216px">0.00</div><div class="t r" style="right:494px;top:216px">0.00</div><div class="t r" style="right:438px;top:216px">-1.04</div><div class="bg" style="left:419px;top:236px;width:57px;background:#E0E0E0"></div><div class="bg" style="left:477px;top:236px;width:113px;background:#E0E0E0"></div><div class="bg" style="left:591px;top:236px;width:46px;background:#E0E0E0"></div><div class="bg" style="left:638px;top:236px;width:29px;background:#E0E0E0"></div><div class="bg" style="left:668px;top:236px;width:42px;background:#E0E0E0"></div><div class="bg" style="left:711px;top:236px;width:51px;background:#E0E0E0"></div><div class="bg" style="left:763px;top:236px;width:51px;background:#E0E0E0"></div><div class="bg" style="left:815px;top:236px;width:49px;background:#E0E0E0"></div><div class="bg" style="left:865px;top:236px;width:114px;background:#E0E0E0"></div><div class="bg" style="left:980px;top:236px;width:49px;background:#E0E0E0"></div><div class="bg" style="left:1030px;top:236px;width:68px;background:#E0E0E0"></div><div class="bg" style="left:1099px;top:236px;width:42px;background:#E0E0E0"></div><div class="bg" style="left:1142px;top:236px;width:47px;background:#E0E0E0"></div><div class="bg" style="left:1190px;top:236px;width:55px;background:#E0E0E0"></div><div class="t r" style="right:1207px;top:236px">32766487</div><div class="t r" style="right:1093px;top:236px">2018.01.11 15:40:06</div><div class="t r" style="right:1046px;top:236px">buy</div><div class="t r" style="right:1016px;top:236px">0.01</div><div class="t r" style="right:973px;top:236px">eurusd</div><div class="t r" style="right:921px;top:236px">1.19939</div><div class="t r" style="right:869px;top:236px">1.19786</div><div class="t r" style="right:819px;top:236px">0.00000</div><div class="t r" style="right:704px;top:236px">2018.01.11 19:58:04</div><div class="t r" style="right:654px;top:236px">1.20322</div><div class="t r" style="right:585px;top:236px">0.00</div><div class="t r" style="right:542px;top:236px">0.00</div><div class="t r" style="right:494px;top:236px">0.00</div><div class="t r" style="right:438px;top:236px">3.83</div><div class="t r" style="right:1207px;top:256px">32778442</div><div class="t r" style="right:1093px;top:256px">2018.01.12 03:08:48</div><div class="t r" style="right:1046px;top:256px">sell</div><div class="t r" style="right:1016px;top:256px">0.02</div><div class="t r" style="right:973px;top:256px">eurusd</div><div class="t r" style="right:921px;top:256px">1.20516</div><div class="t r" style="right:869px;top:256px">1.20605</div><div class="t r" style="right:819px;top:256px">0.00000</div><div class="t r" style="right:704px;top:256px">2018.01.12 03:10:55</div><div class="t r" style="right:654px;top:256px">1.20607</div><div class="t r" style="right:585px;top:256px">0.00</div><div class="t r" style="right:542px;top:256px">0.00</div><div class="t r" style="right:494px;top:256px">0.00</div><div class="t r" style="right:438px;top:256px">-1.82</div><div class="bg" style="left:419px;top:276px;width:57px;background:#E0E0E0"></div><div class="bg" style="left:477px;top:276px;width:113px;background:#E0E0E0"></div><div class="bg" style="left:591px;top:276px;width:46px;background:#E0E0E0"></div><div class="bg" style="left:638px;top:276px;width:29px;background:#E0E0E0"></div><div class="bg" style="left:668px;top:276px;width:42px;background:#E0E0E0"></div><div class="bg" style="left:711px;top:276px;width:51px;background:#E0E0E0"></div><div class="bg" style="left:763px;top:276px;width:51px;background:#E0E0E0"></div><div class="bg" style="left:815px;top:276px;width:49px;background:#E0E0E0"></div><div class="bg" style="left:865px;top:276px;width:114px;background:#E0E0E0"></div><div class="bg" style="left:980px;top:276px;width:49px;background:#E0E0E0"></div><div class="bg" style="left:1030px;top:276px;width:68px;background:#E0E0E0"></div><div class="bg" style="left:1099px;top:276px;width:42px;background:#E0E0E0"></div><div class="bg" style="left:1142px;top:276px;width:47px;background:#E0E0E0"></div><div class="bg" style="left:1190px;top:276px;width:55px;background:#E0E0E0"></div><div class="t r" style="right:1207px;top:276px">32792941</div><div class="t r" style="right:1093px;top:276px">2018.01.12 17:01:09</div><div class="t r" style="right:1046px;top:276px">sell</div><div class="t r" style="right:1016px;top:276px">0.01</div><div class="t r" style="right:973px;top:276px">usdjpy</div><div class="t r" style="right:921px;top:276px">111.649</div><div class="t r" style="right:869px;top:276px">111.772</div><div class="t r" style="right:819px;top:276px">0.000</div><div class="t r" style="right:704px;top:276px">2018.01.12 17:28:37</div><div class="t r" style="right:654px;top:276px">111.416</div><div class="t r" style="right:585px;top:276px">0.00</div><div class="t r" style="right:542px;top:276px">0.00</div><div class="t r" style="right:494px;top:276px">0.00</div><div class="t r" style="right:438px;top:276px">2.09</div><div class="t r" style="right:585px;top:296px">0.00</div><div class="t r" style="right:542px;top:296px">0.00</div><div class="t r" style="right:494px;top:296px">-0.16</div><div class="t r" style="right:438px;top:296px">16.45</div><div class="t b r" style="right:542px;top:316px">Closed P/L:</div><div class="t b bn r" style="right:437px;top:316px">16.29</div><div class="t b" style="left:422px;top:336px">Open Trades:</div><div class="bg" style="left:419px;top:356px;width:57px;background:#C0C0C0"></div><div class="t h c" style="left:419px;width:57px;top:356px">Ticket</div><div class="bg" style="left:477px;top:356px;width:113px;background:#C0C0C0"></div><div class="t h c" style="left:477px;width:113px;top:356px">Open Time</div><div class="bg" style="left:591px;top:356px;width:46px;background:#C0C0C0"></div><div class="t h c" style="left:591px;width:46px;top:356px">Type</div><div class="bg" style="left:638px;top:356px;width:29px;background:#C0C0C0"></div><div class="t h c" style="left:638px;width:29px;top:356px">Size</div><div class="bg" style="left:668px;top:356px;width:42px;background:#C0C0C0"></div><div class="t h c" style="left:668px;width:42px;top:356px">Item</div><div class="bg" style="left:711px;top:356px;width:51px;background:#C0C0C0"></div><div class="t h c" style="left:711px;width:51px;top:356px">Price</div><div class="bg" style="left:763px;top:356px;width:51px;background:#C0C0C0"></div><div class="t h c" style="left:763px;width:51px;top:356px">S / L</div><div class="bg" style="left:815px;top:356px;width:49px;background:#C0C0C0"></div><div class="t h c" style="left:815px;width:49px;top:356px">T / P</div><div class="bg" style="left:865px;top:356px;width:114px;background:#C0C0C0"></div><div class="bg" style="left:980px;top:356px;width:49px;background:#C0C0C0"></div><div class="t h c" style="left:980px;width:49px;top:356px">Price</div><div class="bg" style="left:1030px;top:356px;width:68px;background:#C0C0C0"></div><div class="t h c" style="left:1030px;width:68px;top:356px">Commission</div><div class="bg" style="left:1099px;top:356px;width:42px;background:#C0C0C0"></div><div class="t h c" style="left:1099px;width:42px;top:356px">Taxes</div><div class="bg" style="left:1142px;top:356px;width:47px;background:#C0C0C0"></div><div class="t h c" style="left:1142px;width:47px;top:356px">Swap</div><div class="bg" style="left:1190px;top:356px;width:55px;background:#C0C0C0"></div><div class="t h c" style="left:1190px;width:55px;top:356px">Profit</div><div class="t r" style="right:1207px;top:376px">32774687</div><div class="t r" style="right:1093px;top:376px">2018.01.11 15:40:06</div><div class="t r" style="right:1046px;top:376px">buy</div><div class="t r" style="right:1016px;top:376px">0.01</div><div class="t r" style="right:973px;top:376px">eurusd</div><div class="t r" style="right:921px;top:376px">1.19939</div><div class="t r" style="right:869px;top:376px">1.20228</div><div class="t r" style="right:819px;top:376px">1.22954</div><div class="t r" style="right:654px;top:376px">1.21847</div><div class="t r" style="right:585px;top:376px">0.00</div><div class="t r" style="right:542px;top:376px">0.00</div><div class="t r" style="right:494px;top:376px">-0.12</div><div class="t r" style="right:438px;top:376px">19.08</div><div class="bg" style="left:419px;top:396px;width:57px;background:#E0E0E0"></div><div class="bg" style="left:477px;top:396px;width:113px;background:#E0E0E0"></div><div class="bg" style="left:591px;top:396px;width:46px;background:#E0E0E0"></div><div class="bg" style="left:638px;top:396px;width:29px;background:#E0E0E0"></div><div class="bg" style="left:668px;top:396px;width:42px;background:#E0E0E0"></div><div class="bg" style="left:711px;top:396px;width:51px;background:#E0E0E0"></div><div class="bg" style="left:763px;top:396px;width:51px;background:#E0E0E0"></div><div class="bg" style="left:815px;top:396px;width:49px;background:#E0E0E0"></div><div class="bg" style="left:865px;top:396px;width:114px;background:#E0E0E0"></div><div class="bg" style="left:980px;top:396px;width:49px;background:#E0E0E0"></div><div class="bg" style="left:1030px;top:396px;width:68px;background:#E0E0E0"></div><div class="bg" style="left:1099px;top:396px;width:42px;background:#E0E0E0"></div><div class="bg" style="left:1142px;top:396px;width:47px;background:#E0E0E0"></div><div class="bg" style="left:1190px;top:396px;width:55px;background:#E0E0E0"></div><div class="t r" style="right:1207px;top:396px">32734710</div><div class="t r" style="right:1093px;top:396px">2018.01.10 03:33:00</div><div class="t r" style="right:1046px;top:396px">sell</div><div class="t r" style="right:1016px;top:396px">0.01</div><div class="t r" style="right:973px;top:396px">usdjpy</div><div class="t r" style="right:921px;top:396px">112.587</div><div class="t r" style="right:869px;top:396px">112.409</div><div class="t r" style="right:819px;top:396px">108.208</div><div class="t r" style="right:654px;top:396px">111.040</div><div class="t r" style="right:585px;top:396px">0.00</div><div class="t r" style="right:542px;top:396px">0.00</div><div class="t r" style="right:494px;top:396px">-0.20</div><div class="t r" style="right:438px;top:396px">13.93</div><div class="t r" style="right:1207px;top:416px">32793759</div><div class="t r" style="right:1093px;top:416px">2018.01.12 17:01:09</div><div class="t r" style="right:1046px;top:416px">sell</div><div class="t r" style="right:1016px;top:416px">0.01</div><div class="t r" style="right:973px;top:416px">usdjpy</div><div class="t r" style="right:921px;top:416px">111.649</div><div class="t r" style="right:869px;top:416px">111.913</div><div class="t r" style="right:819px;top:416px">0.000</div><div class="t r" style="right:654px;top:416px">111.040</div><div class="t r" style="right:585px;top:416px">0.00</div><div class="t r" style="right:542px;top:416px">0.00</div><div class="t r" style="right:494px;top:416px">-0.04</div><div class="t r" style="right:438px;top:416px">5.48</div><div class="t r" style="right:585px;top:436px">0.00</div><div class="t r" style="right:542px;top:436px">0.00</div><div class="t r" style="right:494px;top:436px">-0.36</div><div class="t r" style="right:438px;top:436px">38.49</div><div class="t b r" style="right:542px;top:456px">Floating P/L:</div><div class="t b bn r" style="right:437px;top:456px">38.13</div><div class="t b" style="left:422px;top:476px">Working Orders:</div><div class="bg" style="left:419px;top:496px;width:57px;background:#C0C0C0"></div><div class="t h c" style="left:419px;width:57px;top:496px">Ticket</div><div class="bg" style="left:477px;top:496px;width:113px;background:#C0C0C0"></div><div class="t h c" style="left:477px;width:113px;top:496px">Open Time</div><div class="bg" style="left:591px;top:496px;width:46px;background:#C0C0C0"></div><div class="t h c" style="left:591px;width:46px;top:496px">Type</div><div class="bg" style="left:638px;top:496px;width:29px;background:#C0C0C0"></div><div class="t h c" style="left:638px;width:29px;top:496px">Size</div><div class="bg" style="left:668px;top:496px;width:42px;background:#C0C0C0"></div><div class="t h c" style="left:668px;width:42px;top:496px">Item</div><div class="bg" style="left:711px;top:496px;width:51px;background:#C0C0C0"></div><div class="t h c" style="left:711px;width:51px;top:496px">Price</div><div class="bg" style="left:763px;top:496px;width:51px;background:#C0C0C0"></div><div class="t h c" style="left:763px;width:51px;top:496px">S / L</div><div class="bg" style="left:815px;top:496px;width:49px;background:#C0C0C0"></div><div class="t h c" style="left:815px;width:49px;top:496px">T / P</div><div class="bg" style="left:865px;top:496px;width:164px;background:#C0C0C0"></div><div class="t h c" style="left:865px;width:164px;top:496px">Market Price</div><div class="bg" style="left:1030px;top:496px;width:215px;background:#C0C0C0"></div><div class="t c" style="left:419px;width:770px;top:516px">No transactions</div><div class="t b" style="left:422px;top:544px">Summary:</div><div class="t b r" style="right:1092px;top:564px">Deposit/Withdrawal:</div><div class="t b bn r" style="right:1015px;top:564px">34.28</div><div class="t b r" style="right:818px;top:564px">Credit Facility:</div><div class="t b bn r" style="right:703px;top:564px">0.00</div><div class="t b r" style="right:1092px;top:584px">Closed Trade P/L:</div><div class="t b bn r" style="right:1015px;top:584px">16.29</div><div class="t b r" style="right:818px;top:584px">Floating P/L:</div><div class="t b bn r" style="right:703px;top:584px">38.13</div><div class="t b r" style="right:541px;top:584px">Margin:</div><div class="t b bn r" style="right:437px;top:584px">16.00</div><div class="t b r" style="right:1092px;top:604px">Balance:</div><div class="t b bn r" style="right:1015px;top:604px">52.03</div><div class="t b r" style="right:818px;top:604px">Equity:</div><div class="t b bn r" style="right:703px;top:604px">90.16</div><div class="t b r" style="right:541px;top:604px">Free Margin:</div><div class="t b bn r" style="right:437px;top:604px">74.16</div><div class="t b" style="left:422px;top:632px">Details:</div><div class="t b r" style="right:1092px;top:861px">Gross Profit:</div><div class="t b bn r" style="right:1015px;top:861px">20.80</div><div class="t b r" style="right:818px;top:861px">Gross Loss:</div><div class="t b bn r" style="right:703px;top:861px">4.51</div><div class="t b r" style="right:541px;top:861px">Total Net Profit:</div><div class="t b bn r" style="right:437px;top:861px">16.29</div><div class="t b r" style="right:1092px;top:881px">Profit Factor:</div><div class="t b bn r" style="right:1015px;top:881px">4.61</div><div class="t b r" style="right:818px;top:881px">Expected Payoff:</div><div class="t b bn r" style="right:703px;top:881px">1.81</div><div class="t b r" style="right:1092px;top:901px">Absolute Drawdown:</div><div class="t b bn r" style="right:1015px;top:901px">1.06</div><div class="t b r" style="right:818px;top:901px">Maximal Drawdown:</div><div class="t b bn r" style="right:703px;top:901px">1.82 (3.91%)</div><div class="t b r" style="right:541px;top:901px">Relative Drawdown:</div><div class="t b bn r" style="right:437px;top:901px">4.13% (1.63)</div><div class="t b r" style="right:1092px;top:929px">Total Trades:</div><div class="t b bn r" style="right:1015px;top:929px">9</div><div class="t b r" style="right:818px;top:929px">Short Positions (won %):</div><div class="t b bn r" style="right:703px;top:929px">6 (66.67%)</div><div class="t b r" style="right:541px;top:929px">Long Positions (won %):</div><div class="t b bn r" style="right:437px;top:929px">3 (33.33%)</div><div class="t b r" style="right:818px;top:949px">Profit Trades (% of total):</div><div class="t b bn r" style="right:703px;top:949px">5 (55.56%)</div><div class="t b r" style="right:541px;top:949px">Loss trades (% of total):</div><div class="t b bn r" style="right:437px;top:949px">4 (44.44%)</div><div class="t b r" style="right:1092px;top:969px">Largest</div><div class="t b r" style="right:818px;top:969px">profit trade:</div><div class="t b bn r" style="right:703px;top:969px">5.21</div><div class="t b r" style="right:541px;top:969px">loss trade:</div><div class="t b bn r" style="right:437px;top:969px">-1.82</div><div class="t b r" style="right:1092px;top:989px">Average</div><div class="t b r" style="right:818px;top:989px">profit trade:</div><div class="t b bn r" style="right:703px;top:989px">4.16</div><div class="t b r" style="right:541px;top:989px">loss trade:</div><div class="t b bn r" style="right:437px;top:989px">-1.13</div><svg class="abs" style="left:0;top:0" width="1680" height="1050" viewBox="0 0 1680 1050" shape-rendering="crispEdges"><path d="M458.5 660V838M490.5 660V838M522.5 660V838M554.5 660V838M586.5 660V838M618.5 660V838M650.5 660V838M682.5 660V838M714.5 660V838M746.5 660V838M778.5 660V838M810.5 660V838M842.5 660V838M874.5 660V838M906.5 660V838M938.5 660V838M970.5 660V838M1002.5 660V838M1034.5 660V838M1066.5 660V838M1098.5 660V838M1130.5 660V838M1162.5 660V838M1194.5 660V838M427 677.5H1197M427 709.5H1197M427 741.5H1197M427 773.5H1197M427 805.5H1197" stroke="#C0C0C0" stroke-width="1" stroke-dasharray="3 3" fill="none"/><rect x="426.5" y="659.5" width="771" height="179" fill="none" stroke="#000" stroke-width="1"/><path d="M458.5 839v2M490.5 839v2M522.5 839v2M554.5 839v2M586.5 839v2M618.5 839v2M650.5 839v2M682.5 839v2M714.5 839v2M746.5 839v2M778.5 839v2M810.5 839v2M842.5 839v2M874.5 839v2M906.5 839v2M938.5 839v2M970.5 839v2M1002.5 839v2M1034.5 839v2M1066.5 839v2M1098.5 839v2M1130.5 839v2M1162.5 839v2M1194.5 839v2M1198 677.5h2M1198 709.5h2M1198 741.5h2M1198 773.5h2M1198 805.5h2M1198 837.5h2" stroke="#000" stroke-width="1" fill="none"/></svg><svg class="abs" style="left:0;top:0" width="1680" height="1050"><path d="M427 821 L450 830 L474 789 L497 793 L522 802 L546 758 L570 726 L594 741 L618 695 L643 677" stroke="#0000B4" stroke-width="2.2" fill="none" stroke-linejoin="miter"/></svg><div class="t sm" style="left:429px;top:662px;letter-spacing:-0.2px">Баланс</div><div class="t sm" style="left:426px;top:840px">0</div><div class="t sm r" style="right:1221px;top:840px">1</div><div class="t sm r" style="right:1189px;top:840px">3</div><div class="t sm r" style="right:1157px;top:840px">4</div><div class="t sm r" style="right:1125px;top:840px">5</div><div class="t sm r" style="right:1093px;top:840px">7</div><div class="t sm r" style="right:1061px;top:840px">8</div><div class="t sm r" style="right:1029px;top:840px">9</div><div class="t sm r" style="right:997px;top:840px">11</div><div class="t sm r" style="right:965px;top:840px">12</div><div class="t sm r" style="right:933px;top:840px">13</div><div class="t sm r" style="right:901px;top:840px">15</div><div class="t sm r" style="right:869px;top:840px">16</div><div class="t sm r" style="right:837px;top:840px">17</div><div class="t sm r" style="right:805px;top:840px">19</div><div class="t sm r" style="right:773px;top:840px">20</div><div class="t sm r" style="right:741px;top:840px">21</div><div class="t sm r" style="right:709px;top:840px">23</div><div class="t sm r" style="right:677px;top:840px">24</div><div class="t sm r" style="right:645px;top:840px">25</div><div class="t sm r" style="right:613px;top:840px">27</div><div class="t sm r" style="right:581px;top:840px">28</div><div class="t sm r" style="right:549px;top:840px">29</div><div class="t sm r" style="right:517px;top:840px">31</div><div class="t sm r" style="right:485px;top:840px">32</div><div class="t sm" style="left:1201px;top:670px">52</div><div class="t sm" style="left:1201px;top:702px">48</div><div class="t sm" style="left:1201px;top:734px">45</div><div class="t sm" style="left:1201px;top:766px">41</div><div class="t sm" style="left:1201px;top:798px">37</div><div class="t sm" style="left:1201px;top:830px">34</div></div></div></body></html>
